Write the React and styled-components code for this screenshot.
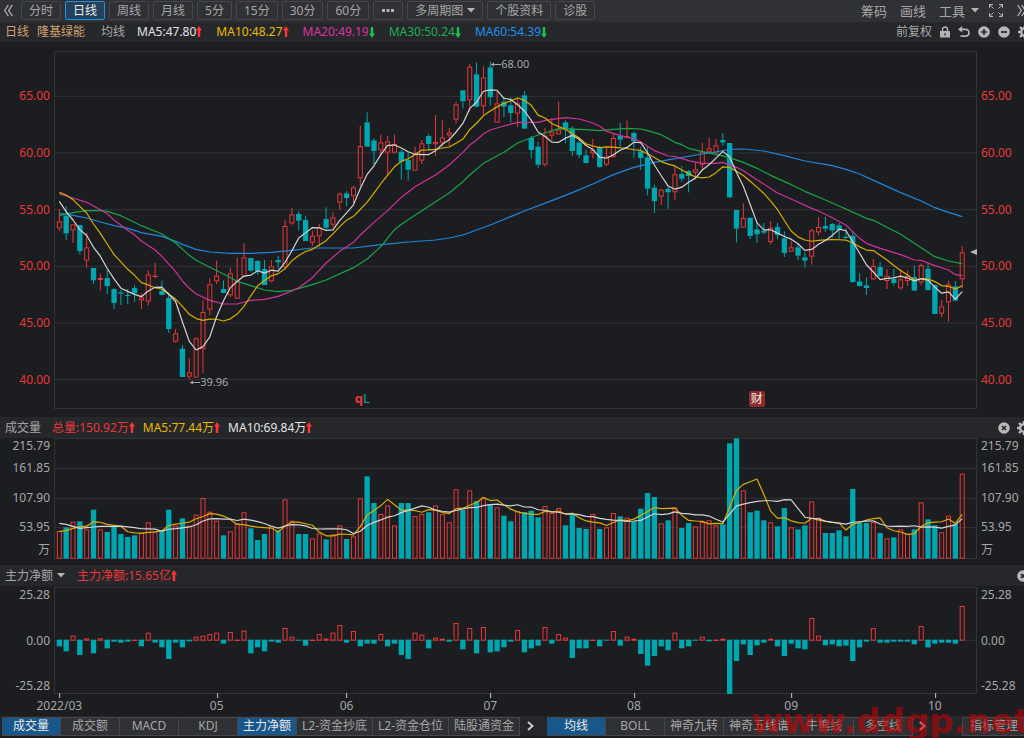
import React, { useState } from "react";
import styled, { createGlobalStyle, css } from "styled-components";

const RED = "#e83838";
const TEAL = "#00a6b0";
const WHITE = "#d4d4d4";
const YELLOW = "#d8ae00";
const MAGENTA = "#cf3399";
const GREEN = "#18a548";
const BLUE = "#1f87dc";

const GlobalStyle = createGlobalStyle`
  * {
    box-sizing: border-box;
  }
  body {
    margin: 0;
    overflow: hidden;
    background: #1c1d20;
    color: #a6a6a6;
    font: 12px/16px "Noto Sans", "Noto Sans CJK SC", sans-serif;
  }
  button {
    font: inherit;
    color: inherit;
    background: none;
    border: 0;
    padding: 0;
    white-space: nowrap;
  }
  svg {
    display: block;
    flex: none;
  }
`;

const Page = styled.div`
  position: relative;
  display: flex;
  flex-direction: column;
  height: 100vh;
  min-height: 520px;
  overflow: hidden;
`;

const Toolbar = styled.nav`
  display: flex;
  align-items: center;
  gap: 4px;
  height: 22px;
  padding: 0 0 1px 4px;
  background: #303135;
`;

const ToolButton = styled.button`
  display: flex;
  align-items: center;
  gap: 4px;
  height: 19px;
  padding: 0 7px;
  border: 1px solid #46474b;
  border-radius: 2px;
  background: #303135;
  ${(props) =>
    props.$active &&
    css`
      color: #ececec;
      border-color: #2191e2;
      background: #21415c;
    `}
`;

const TextButton = styled.button`
  display: flex;
  align-items: center;
  gap: 6px;
  font-size: 13px;
  & + & {
    margin-left: 4px;
  }
`;

const IconButton = styled.button`
  display: flex;
  color: #b4b4b4;
  padding-right: ${(props) => props.$pad || 0}px;
`;

const Tools = styled.div`
  display: flex;
  align-items: center;
  gap: ${(props) => props.$gap}px;
  margin-left: auto;
  margin-right: ${(props) => props.$bleed || 0}px;
`;

const InfoRow = styled.header`
  display: flex;
  align-items: center;
  height: ${(props) => props.$height || 21}px;
  gap: ${(props) => props.$gap}px;
  padding-left: 5px;
  background: #26272b;
  white-space: nowrap;
`;

const StockName = styled.span`
  display: flex;
  gap: 8px;
  margin-right: 2px;
  color: #d0a06c;
`;

const Caption = styled.span`
  margin-right: ${(props) => props.$space}px;
`;

const Stat = styled.span`
  display: flex;
  align-items: center;
  color: ${(props) => props.color};
`;

const IndicatorButton = styled.button`
  display: flex;
  align-items: center;
  gap: 4px;
  margin-right: 4px;
`;

const Pane = styled.section`
  display: grid;
  grid-template-columns: 54px minmax(0, 1fr) 47px;
  ${(props) =>
    props.$grow
      ? css`
          flex: 1;
          min-height: 0;
          margin: 9px 0 8px;
        `
      : css`
          flex: none;
          height: ${props.$height}px;
          margin-top: ${props.$top || 0}px;
          margin-bottom: ${props.$bottom || 0}px;
        `}
`;

const Axis = styled.div`
  display: flex;
  flex-direction: column;
  justify-content: space-between;
  color: ${(props) => (props.$price ? RED : "#a6a6a6")};
  padding: ${(props) => (props.$price ? "37px 4px 21px" : "0 4px")};
  text-align: ${(props) => (props.$left ? "right" : "left")};
  ${(props) =>
    props.$volume &&
    css`
      display: grid;
      grid-template-columns: 1fr;
      grid-template-rows: 22fr 30fr 29fr 23fr 17fr;
    `}
`;

const Plot = styled.div`
  position: relative;
  min-height: 0;
`;

const Canvas = styled.svg`
  position: absolute;
  inset: 0;
  width: 100%;
  height: 100%;
`;

const Callout = styled.span`
  position: absolute;
  display: flex;
  align-items: center;
  font-size: 11px;
  transform: translateY(-50%);
`;

const Badge = styled.span`
  position: absolute;
  bottom: 2px;
  width: 16px;
  height: 16px;
  border-radius: 2px;
  background: #8e2a2a;
  color: #eee;
  text-align: center;
`;

const Letters = styled.span`
  position: absolute;
  bottom: 3px;
  display: flex;
  font: bold 13px/16px "Noto Sans", sans-serif;
  color: ${RED};
  i {
    font-style: normal;
    font-weight: normal;
    color: ${TEAL};
  }
`;

const PriceMarker = styled.span`
  position: absolute;
  right: 0;
  border: 3px solid transparent;
  border-right: 7px solid #b8b8b8;
  border-left: 0;
  transform: translateY(-50%);
`;

const DateRow = styled.div`
  flex: none;
  position: relative;
  height: 22px;
  margin: 0 47px 0 54px;
`;

const DateLabel = styled.span`
  position: absolute;
  top: 0;
  padding-top: 4px;
  transform: translateX(-50%);
  &:before {
    content: "";
    position: absolute;
    top: -1px;
    left: 50%;
    width: 1px;
    height: 5px;
    background: #c4c4c4;
  }
`;

const Tabs = styled.footer`
  display: flex;
  align-items: center;
  flex: none;
  height: 20px;
  margin-bottom: 2px;
  padding-left: 2px;
  background: #25262a;
`;

const Tab = styled.button`
  flex: none;
  min-width: 59px;
  height: 19px;
  padding: 0 5px;
  border: 1px solid #46474b;
  border-left-width: 0;
  background: #303135;
  ${(props) =>
    props.$active &&
    css`
      color: #ececec;
      background: #19568a;
    `}
`;

const TabGroup = styled.div`
  display: flex;
`;

const TabArrow = styled.button`
  display: flex;
  justify-content: center;
  width: ${(props) => props.$width}px;
  padding-right: ${(props) => props.$pad}px;
  color: #c8c8c8;
`;

const ManageButton = styled(Tab)`
  margin-left: auto;
  margin-right: -4px;
  min-width: 66px;
  border-left-width: 1px;
  padding: 0 2px 0 0;
`;

const Watermark = styled.div`
  position: absolute;
  right: -6px;
  bottom: 0;
  font: bold 34px/34px "DejaVu Sans", sans-serif;
  color: rgba(200, 0, 0, 0.56);
  pointer-events: none;
`;

/* ---------- data ---------- */

// one day per row: direction, high, body top, body bottom, low (plot units)
const candles = `
R495,532,553,562 G487,515,568,588 R541,541,559,597 G543,543,621,632 R566,610,650,671
G672,672,709,720 R689,702,708,739 G678,702,726,750 G733,735,777,795 G738,745,749,783
G735,753,756,780 G724,732,748,774 R748,760,769,795 R679,691,773,785 R657,695,699,703
G710,741,753,753 G745,762,855,867 R855,868,893,896 G903,914,999,999 R943,985,998,1006
R880,883,1001,1001 R768,804,916,988 R703,721,797,814 R650,695,712,720 G709,735,747,747
R672,688,754,759 R640,711,764,764 R598,640,698,700 G642,642,680,685 G648,651,683,692
G648,675,723,723 R648,667,712,715 G636,648,655,676 R528,546,670,677 R492,511,538,542
G501,510,530,560 G515,528,591,591 R560,575,596,605 R540,550,577,608 G490,525,551,557
R505,520,542,550 R445,449,476,498 G442,448,462,487 R425,430,457,478 R246,306,403,427
G205,235,308,308 G282,289,321,362 R272,295,319,330 R276,292,326,392 R272,300,326,328
G318,323,353,407 G325,348,377,410 R308,331,380,380 R288,298,350,360 G270,276,300,320
R213,294,301,336 R229,280,296,308 R252,265,274,305 R173,181,227,238 G139,139,172,193
R60,68,169,203 G56,91,188,191 R67,100,187,212 G53,70,160,185 R140,178,236,236
G158,173,188,219 G160,184,207,235 R165,178,209,250 G141,154,254,254 G276,282,318,343
G294,308,362,371 R252,275,362,368 R222,263,275,290 R173,257,271,271 G229,235,255,298
G246,254,321,336 G285,296,333,343 G317,334,357,358 R285,318,328,343 G305,310,369,371
R308,337,362,367 R268,282,338,342 G237,275,287,308 R229,276,281,281 G263,267,292,343
G310,322,342,378 G307,340,434,454 G422,431,471,507 R434,437,458,483 G428,435,445,495
R365,391,445,468 G367,390,404,413 G378,381,396,445 R357,376,386,402 R296,323,362,376
R281,313,325,330 R285,304,326,330 G267,288,295,305 G297,297,460,463 G498,498,554,595
R478,522,551,551 G521,521,576,585 G535,556,571,597 G537,560,566,571 R531,551,594,601
G537,549,573,586 G562,583,627,639 R590,610,623,623 G597,610,635,648 G625,640,650,671
R554,559,638,662 R519,549,565,574 G519,546,554,563 G536,540,559,582 G537,544,557,586
G553,578,582,584 G563,575,714,717 G688,712,726,728 G700,724,732,753 R645,666,706,708
G654,669,697,697 R675,695,711,735 G675,705,717,725 R675,706,733,737 R680,696,711,725
G665,699,740,740 R658,663,715,723 G658,674,738,740 G721,723,810,810 R768,787,809,820
R710,721,775,833 G711,727,770,770 R606,625,706,732`
  .trim()
  .split(/\s+/)
  .map((row) => {
    const [high, top, bottom, low] = row.slice(1).split(",").map(Number);
    return { up: row[0] === "R", high, top, bottom, low };
  });

const volumes = [
  348, 337, 320, 319, 343, 284, 343, 351, 334, 357, 366, 361, 354, 322, 350,
  348, 284, 332, 310, 332, 299, 249, 290, 317, 361, 349, 325, 292, 340, 375,
  357, 332, 347, 253, 317, 357, 357, 370, 355, 373, 358, 331, 372, 364, 250,
  184, 264, 297, 271, 331, 264, 264, 303, 297, 292, 271, 297, 322, 223, 285,
  226, 258, 247, 267, 277, 302, 319, 288, 291, 287, 307, 273, 294, 279, 331,
  298, 339, 342, 297, 342, 337, 294, 304, 308, 319, 281, 234, 246, 325, 316,
  277, 339, 324, 334, 321, 316, 331, 328, 85, 70, 226, 292, 287, 316, 322, 334,
  279, 337, 343, 331, 259, 308, 354, 354, 346, 364, 222, 322, 324, 321, 354,
  370, 367, 343, 357, 343, 262, 313, 331, 352, 302, 328, 176,
];

const flows = [
  244, 259, 213, 270, 221, 265, 221, 250, 230, 233, 230, 225, 244, 204, 233,
  247, 282, 233, 247, 229, 216, 213, 208, 204, 236, 202, 225, 198, 265, 247,
  259, 230, 233, 190, 216, 226, 242, 225, 208, 222, 204, 181, 233, 199, 244,
  236, 236, 208, 244, 236, 270, 282, 204, 210, 250, 219, 222, 230, 175, 253,
  190, 265, 187, 262, 259, 247, 230, 196, 262, 250, 242, 187, 236, 208, 219,
  279, 250, 250, 225, 244, 226, 199, 242, 216, 222, 267, 302, 273, 244, 256,
  204, 250, 244, 226, 216, 229, 225, 222, 387, 288, 238, 270, 241, 233, 222,
  244, 273, 236, 250, 253, 160, 213, 241, 238, 244, 242, 288, 247, 230, 190,
  233, 233, 230, 230, 230, 238, 184, 247, 236, 233, 233, 236, 124,
];

// slow averages, [day, y]
const ma20 = [
  [0, 450], [2, 462], [4, 475], [6, 497], [7, 509], [8, 528], [10, 559],
  [11, 573], [12, 591], [14, 618], [15, 637], [17, 683], [18, 711], [19, 733],
  [20, 750], [22, 769], [24, 780], [26, 780], [28, 769], [30, 766], [32, 757],
  [34, 741], [35, 731], [37, 701], [39, 657], [41, 622], [43, 595], [44, 573],
  [46, 535], [48, 500], [50, 460], [52, 428], [55, 393], [57, 363], [59, 325],
  [60, 303], [61, 288], [62, 270], [63, 258], [65, 246], [67, 235], [70, 235],
  [71, 229], [74, 221], [76, 225], [78, 237], [79, 247], [80, 262], [82, 275],
  [84, 285], [85, 293], [87, 320], [89, 336], [90, 337], [92, 350], [94, 358],
  [96, 358], [97, 355], [99, 370], [100, 380], [102, 407], [105, 447],
  [107, 465], [110, 493], [111, 501], [113, 521], [115, 543], [117, 583],
  [118, 598], [120, 613], [123, 632], [125, 648], [126, 649], [128, 665],
  [130, 678], [131, 692], [132, 695],
];
const ma30 = [
  [0, 514], [2, 506], [4, 500], [6, 500], [7, 502], [9, 515], [12, 545],
  [15, 570], [17, 597], [19, 634], [20, 649], [22, 670], [24, 690], [26, 712],
  [28, 725], [30, 738], [32, 743], [34, 739], [37, 722], [39, 708], [43, 671],
  [45, 645], [47, 608], [49, 557], [50, 541], [52, 514], [54, 487], [57, 447],
  [59, 413], [60, 393], [62, 358], [65, 325], [67, 297], [70, 273], [73, 254],
  [77, 257], [79, 260], [81, 256], [83, 253], [85, 255], [86, 260], [88, 272],
  [90, 295], [91, 302], [92, 313], [94, 323], [96, 331], [98, 341], [100, 355],
  [102, 373], [104, 394], [107, 422], [109, 442], [112, 468], [115, 495],
  [118, 523], [119, 529], [123, 571], [127, 625], [128, 638], [130, 651],
  [132, 659],
];
const ma60 = [
  [0, 508], [2, 514], [4, 522], [6, 534], [8, 545], [10, 553], [12, 566],
  [15, 577], [17, 592], [18, 601], [20, 616], [22, 624], [25, 628], [28, 628],
  [31, 625], [34, 619], [37, 612], [43, 612], [47, 602], [51, 594], [55, 588],
  [57, 582], [59, 573], [63, 543], [68, 501], [72, 470], [75, 446], [78, 420],
  [81, 392], [84, 370], [87, 355], [90, 344], [94, 330], [96, 324], [98, 316],
  [100, 315], [103, 321], [106, 335], [109, 351], [113, 365], [115, 376],
  [117, 390], [120, 418], [123, 446], [126, 471], [128, 491], [130, 505],
  [132, 518],
];

const dates = [
  [0, "2022/03"],
  [23, "05"],
  [42, "06"],
  [63, "07"],
  [84, "08"],
  [107, "09"],
  [128, "10"],
];

/* ---------- chart helpers ---------- */

const WIDTH = 2769;
const dayX = (i) => 16 + 20.52 * i;
const percentX = (i) => `${(dayX(i) / WIDTH) * 100}%`;
const percentY = (y) => `${((y - 21) / 1074) * 100}%`;

// moving average; seed covers the days before the window is full
const average = (values, size, seed) =>
  values.map((_, i) => {
    if (i < size - 1) return [i, seed[i]];
    const part = values.slice(i - size + 1, i + 1);
    return [i, part.reduce((a, b) => a + b, 0) / size];
  });

const closes = candles.map((c) => (c.up ? c.top : c.bottom));
const priceMa5 = average(closes, 5, [472, 503, 528, 557]);
const priceMa10 = average(
  closes,
  10,
  [445, 453, 467, 487, 507, 540, 568, 600, 632]
);
const volumeMa5 = average(volumes, 5, [349, 347, 340, 335]);
const volumeMa10 = average(
  volumes,
  10,
  [325, 328, 334, 340, 338, 336, 334, 334, 334]
);

const Line = ({ points, color }) => (
  <polyline
    points={points.map(([i, y]) => `${dayX(i)},${y}`).join(" ")}
    fill="none"
    stroke={color}
    strokeWidth="3.6"
    strokeLinejoin="round"
  />
);

const Bar = ({ i, top, bottom, up }) =>
  up ? (
    <rect
      x={dayX(i) - 6}
      y={top + 1.5}
      width="12"
      height={Math.max(bottom - top - 3, 1)}
      fill="none"
      stroke={RED}
      strokeWidth="3"
    />
  ) : (
    <rect
      x={dayX(i) - 8}
      y={top}
      width="16"
      height={Math.max(bottom - top, 3)}
      fill={TEAL}
    />
  );

const Grid = ({ top, height, lines }) => (
  <g stroke="#323337" strokeWidth="3" fill="none">
    <rect x="1.5" y={top + 1.5} width={WIDTH - 3} height={height - 3} />
    {lines.map((y) => (
      <line key={y} x1="0" x2={WIDTH} y1={y} y2={y} />
    ))}
  </g>
);

const Chart = ({ top, height, lines, label, children }) => (
  <Canvas
    viewBox={`0 ${top} ${WIDTH} ${height}`}
    preserveAspectRatio="none"
    role="img"
    aria-label={label}
  >
    <Grid top={top} height={height} lines={lines} />
    {children}
  </Canvas>
);

/* ---------- icons ---------- */

const Caret = () => (
  <svg width="8" height="5" viewBox="0 0 8 5" fill="#b4b4b4">
    <path d="M0 0h8L4 4.5z" />
  </svg>
);

const Trend = ({ up }) => (
  <svg width="6" height="12" viewBox="0 0 6 12">
    {up ? (
      <path d="M3 0L6 4.5H4.2V11H1.8V4.5H0z" fill="#ff3434" />
    ) : (
      <path d="M3 12L0 7.5H1.8V1H4.2V7.5H6z" fill="#16c64c" />
    )}
  </svg>
);

const DoubleChevron = ({ right }) => (
  <svg width="9" height="13" viewBox="0 0 9 13" fill="none" stroke="#b4b4b4">
    {right ? (
      <path d="M.7 1l3.6 5.5L.7 12M4.7 1l3.6 5.5L4.7 12" strokeWidth="1.3" />
    ) : (
      <path d="M4.3 1L.7 6.5 4.3 12M8.3 1L4.7 6.5 8.3 12" strokeWidth="1.3" />
    )}
  </svg>
);

const Chevron = () => (
  <svg width="7" height="10" viewBox="0 0 7 10" fill="none">
    <path d="M1 1l4.5 4L1 9" stroke="currentColor" strokeWidth="2" />
  </svg>
);

const Expand = () => (
  <svg width="16" height="15" viewBox="0 0 16 15" fill="none">
    <path
      d="M1.5 5V1.5H5M1.5 1.5l4 4M11 1.5h3.5V5M14.5 1.5l-4 4M1.5 10v3.5H5M1.5 13.5l4-4M11 13.5h3.5V10M14.5 13.5l-4-4"
      stroke="#b4b4b4"
    />
  </svg>
);

const Lock = () => (
  <svg width="10" height="12" viewBox="0 0 10 12">
    <path d="M2.5 5V3.5a2.5 2.5 0 015 0V5" fill="none" stroke="#b4b4b4" strokeWidth="1.4" />
    <path d="M0 5h10v6.5H0z" fill="#b4b4b4" />
    <path d="M4.4 7h1.2v2.4H4.4z" fill="#26272b" />
  </svg>
);

const Undo = () => (
  <svg width="12" height="12" viewBox="0 0 12 12">
    <path d="M3 3.3h4.6a3.4 3.4 0 010 6.9H2.5" fill="none" stroke="#b4b4b4" strokeWidth="1.7" />
    <path d="M0 3.3L4.2 0v6.6z" fill="#b4b4b4" />
  </svg>
);

const marks = {
  plus: "M6 3v6M3 6h6",
  minus: "M3 6h6",
  close: "M4 4l4 4M8 4l-4 4",
};

const Round = ({ mark }) => (
  <svg width="12" height="12" viewBox="0 0 12 12">
    <circle cx="6" cy="6" r="5.8" fill="#b8b8b8" />
    <path d={marks[mark]} stroke="#26272b" strokeWidth="1.7" />
  </svg>
);

const Gear = () => (
  <svg width="14" height="14" viewBox="0 0 14 14">
    <circle cx="7" cy="7" r="3.8" fill="none" stroke="#b8b8b8" strokeWidth="2.4" />
    <g stroke="#b8b8b8" strokeWidth="2.4">
      <path d="M7 0v3M7 11v3M0 7h3M11 7h3M2 2l2.2 2.2M9.8 9.8L12 12M2 12l2.2-2.2M9.8 4.2L12 2" />
    </g>
  </svg>
);

const Pointer = () => (
  <svg width="11" height="6" viewBox="0 0 11 6">
    <path d="M1 3.5h10" stroke="#a6a6a6" />
    <path d="M1 3.5l3-2v4z" fill="#a6a6a6" />
  </svg>
);

/* ---------- page ---------- */

const periods = ["分时", "日线", "周线", "月线", "5分", "15分", "30分", "60分"];
const prices = ["65.00", "60.00", "55.00", "50.00", "45.00", "40.00"];
const volumeScale = ["215.79", "161.85", "107.90", "53.95", "万"];
const flowScale = ["25.28", "0.00", "-25.28"];
const averages = [
  ["MA5:47.80", "#e4e4e4", true],
  ["MA10:48.27", "#e8bc00", true],
  ["MA20:49.19", "#d8359f", false],
  ["MA30:50.24", "#1db050", false],
  ["MA60:54.39", "#2090ea", false],
];
const indicators = [
  "成交量",
  "成交额",
  "MACD",
  "KDJ",
  "主力净额",
  "L2-资金抄底",
  "L2-资金仓位",
  "陆股通资金",
];
const overlays = ["均线", "BOLL", "神奇九转", "神奇五线谱", "牛熊线", "多空线"];

const Scale = ({ values, ...rest }) => (
  <Axis {...rest}>
    {values.map((value) => (
      <span key={value}>{value}</span>
    ))}
  </Axis>
);

export default function App() {
  const [period, setPeriod] = useState("日线");
  const [shown, setShown] = useState(["成交量", "主力净额"]);
  const [overlay, setOverlay] = useState("均线");

  const toggle = (name) =>
    setShown((prev) =>
      prev.includes(name) ? prev.filter((n) => n !== name) : [...prev, name]
    );

  return (
    <Page>
      <GlobalStyle />
      <Toolbar>
        <IconButton aria-label="收起" $pad={4}>
          <DoubleChevron />
        </IconButton>
        {periods.map((name) => (
          <ToolButton
            key={name}
            $active={name === period}
            onClick={() => setPeriod(name)}
          >
            {name}
          </ToolButton>
        ))}
        <ToolButton aria-label="更多周期">
          <svg width="14" height="3" viewBox="0 0 14 3" fill="#b4b4b4">
            <path d="M1 0h3v3H1zM5.5 0h3v3h-3zM10 0h3v3h-3z" />
          </svg>
        </ToolButton>
        <ToolButton aria-haspopup="menu">
          多周期图
          <Caret />
        </ToolButton>
        <ToolButton>个股资料</ToolButton>
        <ToolButton>诊股</ToolButton>
        <Tools $gap={9} $bleed={-2}>
          <TextButton>筹码</TextButton>
          <TextButton>画线</TextButton>
          <TextButton aria-haspopup="menu">
            工具
            <Caret />
          </TextButton>
          <IconButton aria-label="全屏" $pad={4}>
            <Expand />
          </IconButton>
          <IconButton aria-label="展开">
            <DoubleChevron right />
          </IconButton>
        </Tools>
      </Toolbar>

      <InfoRow $gap={14} $height={20}>
        <StockName>
          <span>日线</span>
          <span>隆基绿能</span>
        </StockName>
        <Caption $space={-2}>均线</Caption>
        {averages.map(([text, color, up]) => (
          <Stat key={text} color={color}>
            {text}
            <Trend up={up} />
          </Stat>
        ))}
        <Tools $gap={8} $bleed={-8}>
          <button>前复权</button>
          <IconButton aria-label="锁定">
            <Lock />
          </IconButton>
          <IconButton aria-label="撤销">
            <Undo />
          </IconButton>
          <IconButton aria-label="放大">
            <Round mark="plus" />
          </IconButton>
          <IconButton aria-label="缩小">
            <Round mark="minus" />
          </IconButton>
          <IconButton aria-label="设置">
            <Gear />
          </IconButton>
        </Tools>
      </InfoRow>

      <Pane $grow>
        <Scale values={prices} $price $left />
        <Plot>
          <Chart
            top={21}
            height={1074}
            lines={[157, 327, 497, 667, 837, 1007]}
            label="日K线"
          >
            {candles.map((c, i) => (
              <g key={i}>
                <path
                  d={`M${dayX(i)} ${c.high}V${c.top}M${dayX(i)} ${c.bottom}V${c.low}`}
                  stroke={c.up ? RED : TEAL}
                  strokeWidth="3"
                />
                <Bar i={i} top={c.top} bottom={c.bottom} up={c.up} />
              </g>
            ))}
            <Line points={ma60} color={BLUE} />
            <Line points={ma30} color={GREEN} />
            <Line points={ma20} color={MAGENTA} />
            <Line points={priceMa10} color={YELLOW} />
            <Line points={priceMa5} color={WHITE} />
          </Chart>
          <Callout style={{ left: percentX(63), top: percentY(59) }}>
            <Pointer />
            68.00
          </Callout>
          <Callout style={{ left: percentX(19), top: percentY(1013) }}>
            <Pointer />
            39.96
          </Callout>
          <Letters style={{ left: percentX(43.2) }}>
            q<i>L</i>
          </Letters>
          <Badge style={{ left: percentX(100.8) }}>财</Badge>
          <PriceMarker style={{ top: percentY(625) }} />
        </Plot>
        <Scale values={prices} $price />
      </Pane>

      <InfoRow $gap={8}>
        <Caption $space={3}>成交量</Caption>
        <Stat color={RED}>
          总量:150.92万
          <Trend up />
        </Stat>
        <Stat color="#e8bc00">
          MA5:77.44万
          <Trend up />
        </Stat>
        <Stat color="#e4e4e4">
          MA10:69.84万
          <Trend up />
        </Stat>
        <Tools $gap={7} $bleed={-7}>
          <IconButton aria-label="关闭成交量">
            <Round mark="close" />
          </IconButton>
          <IconButton aria-label="成交量设置">
            <Gear />
          </IconButton>
        </Tools>
      </InfoRow>
      <Pane $height={121} $bottom={6}>
        <Scale values={volumeScale} $volume $left />
        <Plot>
          <Chart top={69} height={363} lines={[160, 250, 338]} label="成交量">
            {volumes.map((y, i) => (
              <Bar key={i} i={i} top={y} bottom={431} up={candles[i].up} />
            ))}
            <Line points={volumeMa5} color={YELLOW} />
            <Line points={volumeMa10} color={WHITE} />
          </Chart>
        </Plot>
        <Scale values={volumeScale} $volume />
      </Pane>

      <InfoRow $gap={8}>
        <IndicatorButton aria-haspopup="menu">
          主力净额
          <Caret />
        </IndicatorButton>
        <Stat color={RED}>
          主力净额:15.65亿
          <Trend up />
        </Stat>
        <Tools $gap={7} $bleed={-5}>
          <IconButton aria-label="关闭主力净额">
            <Round mark="close" />
          </IconButton>
        </Tools>
      </InfoRow>
      <Pane $height={107} $top={1}>
        <Scale values={flowScale} $left />
        <Plot>
          <Chart top={66} height={321} lines={[226]} label="主力净额">
            {flows.map((y, i) =>
              y <= 225 ? (
                <Bar key={i} i={i} top={y - 1} bottom={227} up />
              ) : (
                <Bar key={i} i={i} top={224} bottom={y} />
              )
            )}
          </Chart>
        </Plot>
        <Scale values={flowScale} />
      </Pane>
      <DateRow>
        {dates.map(([day, text]) => (
          <DateLabel key={text} style={{ left: percentX(day) }}>
            {text}
          </DateLabel>
        ))}
      </DateRow>

      <Tabs>
        <TabGroup>
          {indicators.map((name) => (
            <Tab
              key={name}
              $active={shown.includes(name)}
              onClick={() => toggle(name)}
            >
              {name}
            </Tab>
          ))}
        </TabGroup>
        <TabArrow $width={27} $pad={6} aria-label="更多指标">
          <Chevron />
        </TabArrow>
        <TabGroup>
          {overlays.map((name) => (
            <Tab
              key={name}
              $active={name === overlay}
              onClick={() => setOverlay(name)}
            >
              {name}
            </Tab>
          ))}
        </TabGroup>
        <TabArrow $width={18} $pad={0} aria-label="更多主图指标">
          <Chevron />
        </TabArrow>
        <ManageButton>指标管理</ManageButton>
      </Tabs>
      <Watermark>www.ddgp.net</Watermark>
    </Page>
  );
}
